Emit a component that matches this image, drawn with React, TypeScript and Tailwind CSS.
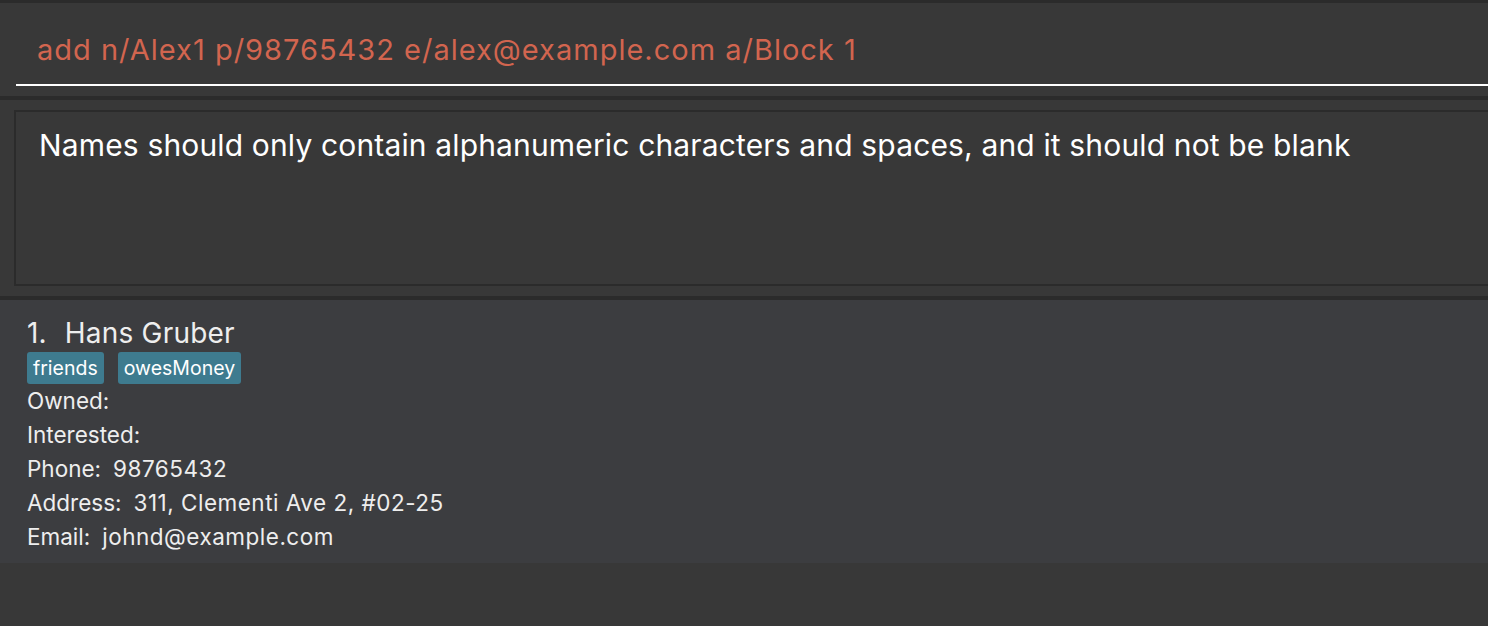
const tags = ['friends', 'owesMoney'];

const details = [
  { label: 'Owned:', value: '' },
  { label: 'Interested:', value: '' },
  { label: 'Phone:', value: '98765432' },
  { label: 'Address:', value: '311, Clementi Ave 2, #02-25' },
  { label: 'Email:', value: 'johnd@example.com' },
];

const App = () => {
  return (
    <div
      className="w-full h-[626px] overflow-hidden bg-[#383838] flex flex-col"
      style={{ fontFamily: 'Inter, "Noto Sans", sans-serif' }}
    >
      {/* Command box */}
      <div className="border-t-[3px] border-[#2b2b2b] h-[96px] shrink-0 pl-4 flex flex-col">
        <div className="flex-1 flex items-center pl-[21px] pt-[12px]">
          <span className="text-[29px] text-[#d2654f] tracking-[1px] whitespace-nowrap">
            add n/Alex1 p/98765432 e/alex@example.com a/Block 1
          </span>
        </div>
        <div className="h-[2px] bg-white mb-[10px]" />
      </div>

      <div className="h-[4px] bg-[#2b2b2b] shrink-0" />

      {/* Result display */}
      <div className="h-[196px] shrink-0 pt-[10px] pl-[14px] pb-[10px]">
        <div className="h-full border-y-2 border-l-2 border-[#2b2b2b] pl-[23px] pt-[11px]">
          <p className="text-[30px] text-white tracking-[0.15px] whitespace-nowrap">
            Names should only contain alphanumeric characters and spaces, and it should not be blank
          </p>
        </div>
      </div>

      <div className="h-[4px] bg-[#2b2b2b] shrink-0" />

      {/* Person list */}
      <div className="bg-[#3c3d40] h-[263px] shrink-0 pl-[27px] pt-[15px] text-[#eeeeee]">
        <div className="text-[28px] leading-[36px] tracking-[0.2px] whitespace-nowrap">
          <span>1.</span>
          <span className="ml-[18px]">Hans Gruber</span>
        </div>
        <div className="flex gap-[14px] mt-[1px]">
          {tags.map((t) => (
            <span
              key={t}
              className="bg-[#3e7b8f] text-white text-[19.5px] leading-[32px] px-[6px] rounded-[3px]"
            >
              {t}
            </span>
          ))}
        </div>
        <div>
          {details.map((d) => (
            <div key={d.label} className="text-[22.5px] leading-[34px] whitespace-nowrap">
              {d.label}
              {d.value && (
                <span className="ml-[12px] tracking-[0.5px]">{d.value}</span>
              )}
            </div>
          ))}
        </div>
      </div>
    </div>
  );
};

export default App;
